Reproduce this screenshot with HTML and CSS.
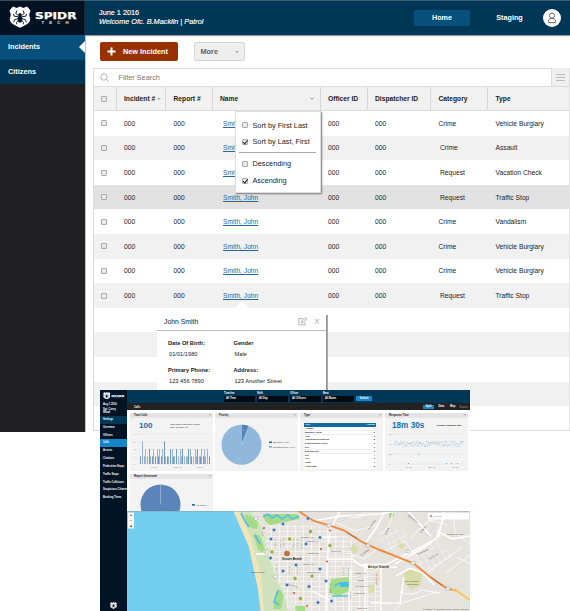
FILE: index.html
```html
<!DOCTYPE html>
<html lang="en">
<head>
<meta charset="utf-8">
<title>SPIDR Tech</title>
<link rel="stylesheet" href="styles.css">
</head>
<body>
<svg class="defs" width="0" height="0" aria-hidden="true">
  <symbol id="badge" viewBox="0 0 22 22">
    <path d="M4 .6 7.500 2 11 .4 14.500 2 18 .6 21.500 4.500 20.200 8.500l1 5C21 18 15 19.500 11 21.800 7 19.500 1 18 .8 13.500l1-5L.5 4.500z" fill="#fff"/>
    <ellipse cx="11" cy="13.200" rx="2.300" ry="3.400" fill="#061526"/>
    <circle cx="11" cy="8.600" r="1.600" fill="#061526"/>
    <path d="M9.800 9.800 6.800 7.500 7.800 4.500M12.200 9.800l3-2.300-1-3M9.500 10.800l-4.300-.6-.9-2.200M12.500 10.800l4.300-.6.9-2.200M9.300 12.500l-3.800 1.300-.8 2.400M12.700 12.500l3.800 1.300.8 2.400M9.400 14.500 7.500 16.300l.4 2M12.600 14.500l1.900 1.800-.4 2" fill="none" stroke="#061526" stroke-width=".95"/>
  </symbol>
</svg>
<div class="page">
  <div class="app">
    <aside class="side">
      <div class="logo">
        <svg class="logo-badge"><use href="#badge"/></svg>
        <svg class="logo-word" viewBox="0 0 44 14">
          <text class="word" x="1" y="7.600" textLength="41.500" lengthAdjust="spacingAndGlyphs">SPIDR</text>
          <text class="tech" x="7.500" y="12.600" textLength="27">TECH</text>
        </svg>
      </div>
      <div class="nav on">Incidents</div>
      <div class="nav">Citizens</div>
    </aside>
    <main class="main">
      <header class="top">
        <div class="hello"><div>June 1 2016</div><i>Welcome Ofc. B.Macklin | Patrol</i></div>
        <div class="tab on">Home</div>
        <div class="tab">Staging</div>
        <div class="avatar"><svg viewBox="0 0 18 18"><circle cx="9" cy="6.600" r="2.600"/><path d="M5.200 13.200c0-2.700 1.700-3.600 2.700-3.600h2.200c1 0 2.700.9 2.700 3.600-1.600.7-6 .7-7.600 0z"/></svg></div>
      </header>
      <div class="actions">
        <div class="btn new"><svg viewBox="0 0 10 10"><path d="M5 .5v9M.5 5h9"/></svg>New Incident</div>
        <div class="btn more">More<span class="tri"></span></div>
      </div>
      <section class="grid">
        <div class="filter">
          <svg class="lens" viewBox="0 0 10 10"><circle cx="4.200" cy="4.200" r="3.400"/><path d="m6.800 6.800 2.400 2.400"/></svg>
          <span>Filter Search</span>
          <div class="burger"><b></b><b></b><b></b></div>
        </div>
        <div class="row head"><div><s></s></div><div>Incident #<span class="tri"></span></div><div>Report #</div><div class="name">Name<span class="tri"></span></div><div>Officer ID</div><div>Dispatcher ID</div><div>Category</div><div>Type</div></div>
        <div class="row"><div><s></s></div><div>000</div><div>000</div><div><u>Smith, John</u></div><div>000</div><div>000</div><div>Crime</div><div>Vehicle Burglary</div></div>
        <div class="row alt"><div><s></s></div><div>000</div><div>000</div><div><u>Smith, John</u></div><div>000</div><div>000</div><div class="in">Crime</div><div>Assault</div></div>
        <div class="row"><div><s></s></div><div>000</div><div>000</div><div><u>Smith, John</u></div><div>000</div><div>000</div><div class="in">Request</div><div>Vacation Check</div></div>
        <div class="row picked"><div><s></s></div><div>000</div><div>000</div><div><u>Smith, John</u></div><div>000</div><div>000</div><div class="in">Request</div><div>Traffic Stop</div></div>
        <div class="row"><div><s></s></div><div>000</div><div>000</div><div><u>Smith, John</u></div><div>000</div><div>000</div><div>Crime</div><div>Vandalism</div></div>
        <div class="row alt"><div><s></s></div><div>000</div><div>000</div><div><u>Smith, John</u></div><div>000</div><div>000</div><div>Crime</div><div>Vehicle Burglary</div></div>
        <div class="row"><div><s></s></div><div>000</div><div>000</div><div><u>Smith, John</u></div><div>000</div><div>000</div><div>Crime</div><div>Vehicle Burglary</div></div>
        <div class="row alt"><div><s></s></div><div>000</div><div>000</div><div><u>Smith, John</u></div><div>000</div><div>000</div><div class="in">Request</div><div>Traffic Stop</div></div>
        <div class="row"></div><div class="row alt"></div><div class="row"></div><div class="row alt"></div><div class="row last"></div>
      </section>
    </main>
  </div>

  <div class="menu">
    <label><s></s>Sort by First Last</label>
    <label><s class="ck"></s>Sort by Last, First</label>
    <hr>
    <label><s></s>Descending</label>
    <label><s class="ck"></s>Ascending</label>
  </div>

  <div class="person">
    <div class="person-head"><span>John Smith</span>
      <svg viewBox="0 0 10 9"><path d="M7 5.500v2.300H.8V1.600h4.500M3.400 5.900l.5-1.800L7.800.6 9 1.800 5.200 5.500z"/></svg><em>X</em></div>
    <div class="facts">
      <div><b>Date Of Birth:</b><p>01/01/1980</p></div><div><b>Gender</b><p>Male</p></div>
      <div><b>Primary Phone:</b><p>123 456 7890</p></div><div><b>Address:</b><p>123 Another Street</p></div>
    </div>
  </div>

  <div class="dash">
    <aside class="d-side">
      <div class="d-logo"><svg class="d-badge"><use href="#badge"/></svg><svg class="d-word" viewBox="0 0 44 14"><text class="word" x="1" y="7.600" textLength="41" lengthAdjust="spacingAndGlyphs">SPIDR</text><text class="tech" x="8" y="12.600" textLength="27">TECH</text></svg></div>
      <div class="who">Aug 1 2016</div>
      <div class="who two">Sgt. Corey<br>Wood</div>
      <div class="d-nav set">Settings</div><div class="d-nav">Overview</div><div class="d-nav">Officers</div><div class="d-nav on">Calls</div><div class="d-nav">Arrests</div><div class="d-nav">Citations</div><div class="d-nav">Pedestrian Stops</div><div class="d-nav">Traffic Stops</div><div class="d-nav">Traffic Collisions</div><div class="d-nav">Suspicious Citizens</div><div class="d-nav">Booking Times</div>
      <svg class="d-foot"><use href="#badge"/></svg>
    </aside>
    <div class="d-main">
      <div class="d-top">
        <div class="sel">Timeline<span>All Time</span></div><div class="sel">Shift<span>All Day</span></div><div class="sel">Officer<span>All Officers</span></div><div class="sel">Beat<span>All Beats</span></div>
        <div class="submit">Submit</div>
      </div>
      <div class="d-sub"><span>Calls</span><i class="on">Split</i><i>Data</i><i>Map</i><em>Export</em></div>
      <div class="cards">
        <section class="card"><h4>Total Calls<span>×</span></h4>
          <div class="stat"><strong>100</strong><p>Total Calls in this time period<br>Daily average: 11</p></div>
          <svg class="plot" viewBox="0 0 82 40" id="bars"><path class="rule" d="M8 2h71M8 10h71M8 17.500h71M8 25h71M8 32h71"/>
            <g class="tick"><text x="4" y="2.800">4</text><text x="4" y="10.800">3</text><text x="4" y="18.300">2</text><text x="4" y="25.800">1</text><text x="4" y="32.800">0</text><text x="20" y="35.600">Apr '16</text><text x="44" y="35.600">May '16</text><text x="67" y="35.600">Jul '16</text></g></svg>
        </section>
        <section class="card"><h4>Priority<span>×</span></h4>
          <svg class="pie" viewBox="0 0 82 53"><circle cx="26.500" cy="26.700" r="20" fill="#90b8dc"/><path d="M26.500 26.700v-20a20 20 0 0 1 7.300 1.400z" fill="#5682b8"/><path d="M26.500 6.700v20l7.300-18.600" fill="none" stroke="#dce9f5" stroke-width=".4"/>
            <g class="leg"><rect x="54" y="23.500" width="3" height="1.600" fill="#2468b3"/><rect x="54" y="28" width="3" height="1.600" fill="#79aadb"/><text x="58" y="25.200">Emergency (6%)</text><text x="58" y="29.800">Non-Emergency (94%)</text></g><g class="tick white"><text x="28" y="12.500">6</text><text x="23" y="41">94</text></g></svg>
        </section>
        <section class="card"><h4>Type<span>×</span></h4>
          <div class="types">
            <div class="th"><span>Type</span><span>Amount</span></div>
            <div><span>Assault</span><span>4</span></div><div><span>Burglary Alarm</span><span>6</span></div><div><span>Civil</span><span>3</span></div><div><span>Construction Request</span><span>8</span></div><div><span>Disturbing the Peace</span><span>5</span></div><div><span>DUI</span><span>9</span></div><div><span>Dog Barking</span><span>2</span></div><div><span>Dui</span><span>4</span></div><div><span>Fire</span><span>6</span></div><div><span>Fight</span><span>7</span></div><div><span>Flag Down</span><span>8</span></div>
          </div>
        </section>
        <section class="card"><h4>Response Time<span>×</span></h4>
          <div class="stat resp"><strong>18m 30s</strong><p>Average response time</p></div>
          <svg class="plot" viewBox="0 0 82 40" id="dots"><path class="rule" d="M8 2h71M8 12h71M8 22h71M8 32h71"/>
            <g class="tick"><text x="4" y="2.800">60</text><text x="4" y="12.800">40</text><text x="4" y="22.800">20</text><text x="4" y="32.800">0</text><text x="20" y="35.600">Apr '16</text><text x="43" y="35.600">May '16</text><text x="67" y="35.600">Jul '16</text></g></svg>
        </section>
        <section class="card short"><h4>Report Generated<span>×</span></h4>
          <svg class="pie" viewBox="0 0 82 33"><circle cx="30.500" cy="25.500" r="20" fill="#5a84ba"/><path d="M30.500 5.500v20" stroke="#dce9f5" stroke-width=".4"/><g class="leg"><rect x="62" y="25" width="3" height="1.600" fill="#2468b3"/><text x="65.500" y="26.700">Yes (100%)</text></g></svg>
        </section>
      </div>
      <svg class="map" viewBox="0 0 343 100">
        <defs>
          <pattern id="blk" width="8" height="5" patternUnits="userSpaceOnUse"><path d="M0 0h8M0 0v5" stroke="#fff" stroke-width="1.100" fill="none"/></pattern>
          <pattern id="blk2" width="6" height="8" patternUnits="userSpaceOnUse" patternTransform="rotate(-28)"><path d="M0 0h6M0 0v8" stroke="#fff" stroke-width=".9" fill="none"/></pattern>
        </defs>
        <path fill="#e6e3de" d="M0 0h343v100H0z"/>
        <path fill="url(#blk)" d="M139 13l48 2 20 3 24 13-5 19 12 50h-80l-6-22-12-30z"/>
        <path fill="url(#blk)" d="M238 52h16v48h-16z"/>
        <path fill="url(#blk2)" d="M276 44l34-14 16 14-28 18zM252 30l12-14 18 5-14 19z" opacity=".8"/>
        <path fill="#73cef0" d="M0 0h106.500l8.200 19 7.300 16.700 4.300 20 5 23.300 2.400 21H0z"/>
        <path fill="#f3e4b5" d="M106.500 0h6L123 24l4 15 7 25 3 36h-3.300l-2.400-21-5-23.300-4.300-20L114.700 19z"/>
        <path fill="#cfe2bd" d="M112.500 0h12.200l10 15.700 5 24L148 64l10 21 3 15h-24l-3-36-7-25-4-15z"/>
        <path fill="#a4dc86" d="M118 3q8 2 13 8l-1 7q-8 0-11-8zM126 23q7-1 9 7l3 9q-3 4-7-1zM150 80q6-4 7 3l-3 15h-8zM136 3l34 0 3 5-30 6-5-4zM204 68l18-2v14l-10 5-10-3zM262 0h5v5l-5 3zM168 95h10v5h-10z"/>
        <path fill="#d9dda8" d="M277 62l9-5 9 6-1 11-9 5-8-7zM226 33l6 4-4 6-5-4zM269 34l5-4 4 5-4 3zM242 74h6l-1 8h-6z"/>
        <path fill="#f2d8c6" d="M236 35h11v7l-11-1zM248 60h6v13h-6z" opacity=".7"/>
        <path fill="none" stroke="#57bce8" stroke-width="1.700" d="m114 2 4 8 4 6M136 6l5-3 4 4 5-3 5 4 6-4 4 4 7-3M128 24l5 9M151 79l-4 12 5 3M207 75l6-3M205 85h16"/>
        <path fill="#49bfe9" d="M213 71h9v5h-9z"/>
        <g fill="none" stroke="#fff" stroke-width="1.500">
          <path d="M124.700 0l10 15.700 5 23.300L148 64l10 22 11 14M129 43h14M213 0l-10 19-3 34-1 47M199 48h27l7 6 27-1 30-15 19-10 8-22M186 10l28-5 38-2 19-3M226 50l14 7 30-1M239 31l11-15 8-16M238 52v48M223 58l-1 42M310 20l15 8 18-3M317 0l-5 25-14 11-30 17M304 25l-23-25M269 65l14-8 13 5 11 12M244 92h29l4-26M190 26h20M185 80l20 10M254 53v47"/>
          <path stroke-width=".8" d="M221 6q16 3 18-6M252 23q12-4 14-23M283 27l20-18 17 5M326 0l2 22 15 11M258 40l20-10 8 12M319 62l24-18M310 81l-35 11-8 8M272 81q16 5 22-2l19 3M210 12l18 8 23-6M330 46l13 7M300 62l35-26M220 42l17 6 12-9"/>
        </g>
        <path d="M124.700 0l10 15.700 5 23.300L148 64l10 22 11 14" fill="none" stroke="#8bcf76" stroke-width=".6"/>
        <g fill="none" stroke="#cfcac6" stroke-width=".5"><path d="M215 10l20-10M277 4l16 13M300 26l12-18"/></g>
        <path fill="none" stroke="#f08a3c" stroke-width="1.900" d="M171.300 0l15 9.700 16.700 5 13.300 4.300 20 12.700L253 39l16.700 6.700 16.600 6.600 16.700 13.400 16.700 11.600 10 2.400"/>
        <path fill="none" stroke="#f9c640" stroke-width="1.700" d="m325 78.500 4.700 1.200L343 89"/>
        <path fill="none" stroke="#886248" stroke-width=".7" d="m220 21.500 10 6M304 66.500l11 8"/>
        <g fill="#f4f4f4" stroke="#888" stroke-width=".4"><circle cx="129" cy="7.500" r="1.900"/><circle cx="140" cy="41" r="1.900"/><circle cx="148.500" cy="65.500" r="1.900"/><ellipse cx="202" cy="14.500" rx="2.300" ry="1.500"/><ellipse cx="241" cy="34.500" rx="2.300" ry="1.500"/><ellipse cx="281" cy="40.500" rx="2.300" ry="1.500"/><ellipse cx="286" cy="52" rx="2.300" ry="1.500"/><ellipse cx="321" cy="77.500" rx="2.300" ry="1.500"/></g>
        <g class="pins blue"><circle cx="156" cy="13" r="1.700"/><circle cx="147" cy="19" r="1.700"/><circle cx="144" cy="28" r="1.700"/><circle cx="143.500" cy="47" r="1.700"/><circle cx="156" cy="60" r="1.700"/><circle cx="181" cy="7.500" r="1.700"/><circle cx="193" cy="26.500" r="1.700"/><circle cx="179" cy="33" r="1.700"/><circle cx="169" cy="54" r="1.700"/><circle cx="193" cy="58" r="1.700"/><circle cx="199" cy="70" r="1.700"/><circle cx="160" cy="74" r="1.700"/><circle cx="182" cy="75.500" r="1.700"/><circle cx="191" cy="91.500" r="1.700"/><circle cx="204.500" cy="90" r="1.700"/></g>
        <g class="pins olive"><circle cx="145" cy="41" r="1.900"/><circle cx="183.500" cy="20.500" r="1.900"/><circle cx="162.500" cy="28" r="1.900"/><circle cx="203" cy="34.500" r="1.900"/><circle cx="168" cy="67.500" r="1.900"/><circle cx="185" cy="65" r="1.900"/><circle cx="173.500" cy="87.500" r="1.900"/></g>
        <circle cx="160" cy="42.500" r="2.600" fill="#c9772f" stroke="#8a572a" stroke-width=".5"/>
        <g fill="#e3352d"><circle cx="137" cy="17" r=".9"/><circle cx="203" cy="19.500" r=".9"/><circle cx="194" cy="38" r=".9"/><circle cx="200" cy="50.500" r=".9"/><circle cx="167" cy="82" r=".9"/><circle cx="180" cy="95" r=".9"/></g>
        <g class="place">
          <text class="big" x="155" y="48.600">Grover Beach</text><text class="big" x="241" y="56.600">Arroyo Grande</text>
          <text x="124" y="62.300">Pismo Beach</text><text x="174" y="27">Brighton Ave</text><text x="179" y="31">Newport Ave</text><text x="180" y="43">Atlantic City</text><text x="176" y="54">Grand Ave</text><text x="180" y="62">Mentone Ave</text><text x="204" y="40.500">Brisco Rd</text><text x="160" y="74" transform="rotate(15 160 74)">Farroll Ave</text><text x="228" y="62.500">Grand Ave</text><text x="230" y="69.500">Ash St</text><text x="228" y="76">Fair Oaks Ave</text><text x="228" y="83">Farroll Rd</text><text x="231" y="98">Elm Way</text><text x="320" y="24">Stagecoach Rd</text><text x="277" y="71">Arroyo Grande</text><text x="279" y="74">High School</text>
          <text transform="translate(242 19)rotate(-55)">James Way</text><text transform="translate(259 24)rotate(-65)">Corbett</text><text transform="translate(281 5)rotate(38)">Equestrian</text><text transform="translate(294 22)rotate(-50)">Easy St</text><text transform="translate(234 45)rotate(-35)">El Camino</text><text transform="translate(291 44)rotate(-25)">Huasna Rd</text><text transform="translate(302 49)rotate(-30)">Cherry Ave</text><text transform="translate(136 25)rotate(-90)">N 4th St</text><text transform="translate(149 36)rotate(-90)">N 6th St</text><text transform="translate(154 37)rotate(-90)">N 8th St</text><text transform="translate(157 36)rotate(-90)">N 9th St</text><text transform="translate(167 37)rotate(-90)">N 10th St</text><text transform="translate(171 37)rotate(-90)">N 11th St</text><text transform="translate(175 38)rotate(-90)">N 13th St</text><text transform="translate(150 61)rotate(-90)">S 4th St</text><text transform="translate(163 63)rotate(-90)">S 8th St</text><text transform="translate(171 63)rotate(-90)">S 9th St</text><text transform="translate(217 65)rotate(-90)">S Oak St</text><text transform="translate(222 65)rotate(-90)">S Elm St</text><text transform="translate(204 82)rotate(-90)">S 16th St</text><text transform="translate(224 88)rotate(-90)">Alder St</text><text transform="translate(250 74)rotate(-90)">Halcyon Rd</text>
          <text x="296" y="98.800" textLength="46" lengthAdjust="spacingAndGlyphs">© Mapbox © OpenStreetMap  Improve this map</text>
        </g>
        <path d="M0 0h343v.8H0z" fill="#8ba1a4" opacity=".7"/>
        <rect x="1" y="1.500" width="6" height="16" rx=".6" fill="#fff"/><g class="ctl"><text x="2.800" y="5.300">+</text><text x="2.800" y="10.600">−</text><text x="2.600" y="15.700">▴</text></g>
        <rect x="301" y="2" width="41" height="6.500" fill="#fff"/><circle cx="303.800" cy="5" r=".8" fill="none" stroke="#444" stroke-width=".5"/><path d="m304.400 5.600 1 1" stroke="#444" stroke-width=".5"/><text x="307" y="6.200" class="srch">Search</text>
      </svg>
    </div>
  </div>
</div>
<script src="charts.js"></script>
</body>
</html>
```
FILE: styles.css
```css
* { box-sizing: border-box; }
body { margin: 0; background: #fff; font-family: "Liberation Sans", Arial, sans-serif; font-size: 6.7px; color: #222; }
p, h4 { margin: 0; }
.defs { position: absolute; }
.page { position: relative; width: 570px; height: 611px; overflow: hidden; }
.app { display: flex; width: 570px; height: 432px; }

.side { width: 85px; background: #202022; color: #fff; font-size: 7.3px; font-weight: bold; }
.logo { display: flex; height: 35px; padding: 5px 0 0 9px; background: #021223; border-top: 1px solid #3c4f59; }
.logo-badge { width: 22px; height: 22px; }
.logo-word { width: 44px; height: 14px; margin: 5px 0 0 3px; }
.word { font: bold 8.500px "DejaVu Sans", sans-serif; fill: #fff; stroke: #fff; stroke-width: .25px; }
.tech { font: bold 4.300px "Liberation Sans", sans-serif; fill: #e6ebef; }
.nav { position: relative; height: 24.700px; line-height: 24px; padding-left: 8px; background: #003555; }
.nav.on { background: #07507c; border-bottom: 1px solid #02466e; }
.nav.on::after { content: ""; position: absolute; right: 0; top: 6px; border: 6px solid transparent; border-right-color: #fff; border-left: 0; }

.main { width: 485px; border-left: 1px solid #c3c3c3; }
.top { display: flex; align-items: center; height: 34.500px; margin-left: -1px; padding: 0 9px 0 14px; background: #003656; border-top: 1px solid #3d5f72; color: #fff; box-shadow: 0 1px 1px #999; }
.hello { width: 315px; font-size: 7.300px; line-height: 8.700px; -webkit-text-stroke: .15px #fff; }
.tab { width: 56px; height: 16px; line-height: 15px; border-radius: 2px; text-align: center; font-size: 7.200px; font-weight: bold; }
.tab.on { background: #07507c; }
.tab + .tab { width: 79px; padding-left: 0; }
.avatar { width: 18px; height: 18px; margin-left: -6px; border-radius: 50%; background: #fff; }
.avatar svg { display: block; fill: none; stroke: #555; stroke-width: .9; }

.actions { display: flex; gap: 15.500px; height: 33px; padding: 7.500px 0 0 13.500px; }
.btn { display: flex; align-items: center; height: 19px; border-radius: 2px; font-size: 7.300px; font-weight: bold; }
.new { width: 78.500px; padding-left: 7px; background: #993203; color: #fff; }
.new svg { width: 9px; height: 9px; margin-right: 7.500px; stroke: #fff; stroke-width: 2.200; }
.more { width: 51px; padding: 0 5px 0 6px; justify-content: space-between; background: #eee; border: 1px solid #d5d5d5; color: #606060; }
.tri { border: 2px solid transparent; border-top: 2px solid #aaa; border-bottom: 0; }

.grid { margin-left: 6.500px; border-left: 1px solid #ddd; }
.filter { display: flex; align-items: center; height: 19.500px; padding-left: 6px; border: 1px solid #ddd; border-left: 0; font-size: 7.300px; color: #777; }
.lens { width: 9.500px; height: 9.500px; margin-right: 9.500px; fill: none; stroke: #999; stroke-width: .8; }
.burger { display: flex; flex-direction: column; justify-content: center; gap: 2px; width: 18px; height: 18px; margin-left: auto; padding: 0 4px; background: #f0f0f0; border-left: 1px solid #ddd; }
.burger b { height: 1px; background: #bbb; }
.row { display: grid; grid-template-columns: 23px 49.500px 47px 107.500px 47px 63.500px 57px 1fr; align-items: center; height: 24.620px; border-right: 1px solid #e2e2e2; }
.row > div { padding-left: 7.500px; white-space: nowrap; }
.row > div:nth-child(4) { padding-left: 10px; }
.row > div.in { padding-left: 9px; }
.row.alt { background: #f1f1f1; }
.row.picked { background: #e2e2e2; }
.row.last { border-bottom: 1px solid #ddd; }
.row.head { height: 24px; background: #f1f1f1; border-bottom: 1px solid #ddd; font-weight: bold; align-items: stretch; font-size: 6.700px; }
.head > div { display: flex; align-items: center; justify-content: space-between; padding-right: 4px; border-right: 1px solid #d8d8d8; }
.row.head > .name { padding-left: 7px; padding-right: 6px; }
.head > div:last-child { border-right: 0; }
.row u { color: #28699c; }
s { display: inline-block; width: 6px; height: 6px; border: 1px solid #aaa; border-radius: 1px; background: #e9e9e9; vertical-align: middle; }
.row s { display: block; }

.menu { position: absolute; left: 234.500px; top: 111px; width: 86px; height: 82px; padding: 4.700px 6px; background: #fff; border: 1px solid #ddd; box-shadow: 1px 1px 1.500px #777; font-size: 7.300px; }
.menu label { display: flex; align-items: center; height: 16.700px; gap: 5px; white-space: nowrap; }
.menu hr { width: 77px; height: 1px; margin: 1.500px 0 3px -3px; border: 0; background: #aaa; }
.ck { position: relative; }
.ck::after { content: ""; position: absolute; left: 1.200px; top: -.6px; width: 1.800px; height: 3.600px; border: solid #222; border-width: 0 1.200px 1.200px 0; transform: rotate(40deg); }

.person { position: absolute; left: 157px; top: 309px; width: 168.500px; height: 90px; background: #fff; font-size: 5.700px; }
.person::before { content: ""; position: absolute; left: 77px; top: -8px; border: 8px solid transparent; border-top: 0; border-bottom-color: #fff; }
.person::after { content: ""; position: absolute; left: 168.500px; top: 6px; width: 2.500px; height: 90px; background: linear-gradient(90deg, #999, #8b8b8b 60%, #ddd); }
.person-head { display: flex; align-items: center; height: 21.500px; padding: 4px 6px 0 7px; border-bottom: 1px solid #bbb; font-size: 6.850px; }
.person-head svg { width: 10px; height: 9px; margin: 0 6.500px 0 auto; fill: none; stroke: #aaa; stroke-width: .9; }
.person-head em { font-style: normal; font-size: 8px; color: #aaa; }
.facts { display: grid; grid-template-columns: 65.500px 1fr; row-gap: 8.500px; padding: 9px 0 0 11px; }
.facts b, .facts p { display: block; height: 7px; line-height: 7px; }
.facts p { margin: 4.500px 0 0 1px; }

.dash { position: absolute; left: 100px; top: 390px; display: flex; width: 370px; height: 221px; background: #fff; font-size: 2.600px; }
.d-side { display: flex; flex-direction: column; width: 27px; background: #011425; color: #fff; font-weight: bold; }
.d-logo { display: flex; height: 13px; padding: 1.500px 0 0 3px; }
.d-badge { width: 7.500px; height: 7.500px; }
.d-word { width: 14px; height: 5px; margin-top: 2px; }
.who { height: 4.500px; padding-left: 3px; line-height: 3.500px; }
.who.two { height: 8.500px; line-height: 3px; }
.d-nav { height: 7.840px; line-height: 7.840px; padding-left: 3px; white-space: nowrap; }
.set { background: #003656; }
.d-nav.on { background: #1585c8; }
.d-foot { width: 7px; height: 9px; margin: auto 0 1px 10px; }
.d-main { width: 343px; display: flex; flex-direction: column; }
.d-top { display: flex; gap: 2px; height: 13.300px; padding: 2px 0 0 97px; background: #003656; color: #fff; }
.sel { width: 31px; line-height: 3.500px; font-weight: bold; }
.sel span { display: block; width: 31px; height: 6px; margin-top: .3px; padding-left: 2px; line-height: 6px; background: #050b10; }
.submit { width: 16px; height: 5px; margin: 4px 0 0; background: #1585c8; text-align: center; line-height: 5px; font-weight: bold; }
.d-sub { display: flex; align-items: center; gap: 3px; height: 6.700px; padding: 1px 2px 0 7px; background: #222; color: #fff; font-weight: bold; }
.d-sub span { margin-right: auto; }
.d-sub i { font-style: normal; padding: 0 1.500px; line-height: 3.500px; }
.d-sub i.on { padding: 0 2.500px; background: #1585c8; }
.d-sub em { font-style: normal; color: #777; }
.cards { display: grid; grid-template-columns: repeat(4, 82.500px); grid-template-rows: 58px 37px; gap: 3px 2.500px; height: 101px; padding: 3px 0 0 3px; overflow: hidden; }
.card { background: #f3f3f3; overflow: hidden; }
.card h4 { display: flex; justify-content: space-between; height: 4.700px; padding: 0 2px 0 4px; line-height: 5.600px; background: #e4e4e4; font-size: 2.700px; }
.card h4 span { color: #888; }
.stat { display: flex; height: 14px; padding: 3px 0 0 9px; line-height: 3px; }
.stat strong { width: 31px; font-size: 8.100px; line-height: 10px; color: #1670a8; }
.stat p { padding-top: 2px; font-size: 2.350px; white-space: nowrap; }
.resp { padding-left: 7px; }
.resp strong { width: 44px; font-size: 8.200px; white-space: nowrap; }
.resp p { padding-top: 3px; font-weight: bold; }
.plot { display: block; width: 82px; height: 40px; }
.rule { fill: none; stroke: #d6d6d6; stroke-width: .3; }
.tick { font-size: 2.200px; fill: #777; }
.tick.white { fill: #fff; }
.leg { font-size: 2.200px; fill: #333; }
.pie { display: block; width: 82px; }
.types { width: 72px; margin: 5.500px 0 0 4px; font-size: 2.300px; font-weight: bold; }
.types div { display: flex; justify-content: space-between; height: 3.820px; line-height: 3.820px; padding: 0 1px; background: linear-gradient(#d4d4d4, #d4d4d4) 0 100% / 100% .4px no-repeat #fff; }
.types .th { background: #1369a3; color: #fff; }
.map { display: block; width: 343px; height: 100px; }
.pins circle { stroke: #eef3f6; stroke-width: .4; }
.blue { fill: #3972b8; }
.olive { fill: #9aaa2f; }
.place { font-size: 2.300px; fill: #555; }
.place .big { font-size: 3px; font-weight: bold; fill: #222; }
.ctl { font-size: 4px; font-weight: bold; fill: #333; }
.srch { font-size: 2.500px; fill: #999; }
```
FILE: charts.js
```js
const NS = "http://www.w3.org/2000/svg";
function rect(parent, x, y, w, h, fill) {
  const r = document.createElementNS(NS, "rect");
  Object.entries({ x, y, width: w, height: h, fill }).forEach(([k, v]) => r.setAttribute(k, v));
  parent.append(r);
}

// Calls per day, in chart levels of one to four.
const calls = "1030120102101201021201203101102021102010212010112021010212011201210201";
const bars = document.getElementById("bars");
[...calls].forEach((c, i) => {
  const h = +c * 7.5;
  rect(bars, 10 + i * 1.0, 32 - h, 0.85, h, i % 3 ? "#88a8cc" : "#5f88b8");
});

// Response times, scattered round forty minutes.
const dots = document.getElementById("dots");
for (let i = 0; i < 105; i++) {
  if (i % 13 === 5) continue;
  rect(dots, 9 + i * 0.66, 11.4 + Math.sin(i * i * 2.7) * 2.4, 0.8, 0.8, "#86b1dc");
}
[[23, 31], [33, 21.8], [61, 31], [66, 31], [72, 31]].forEach(([x, y]) => rect(dots, x, y, 0.9, 0.9, "#5a93cc"));
```
